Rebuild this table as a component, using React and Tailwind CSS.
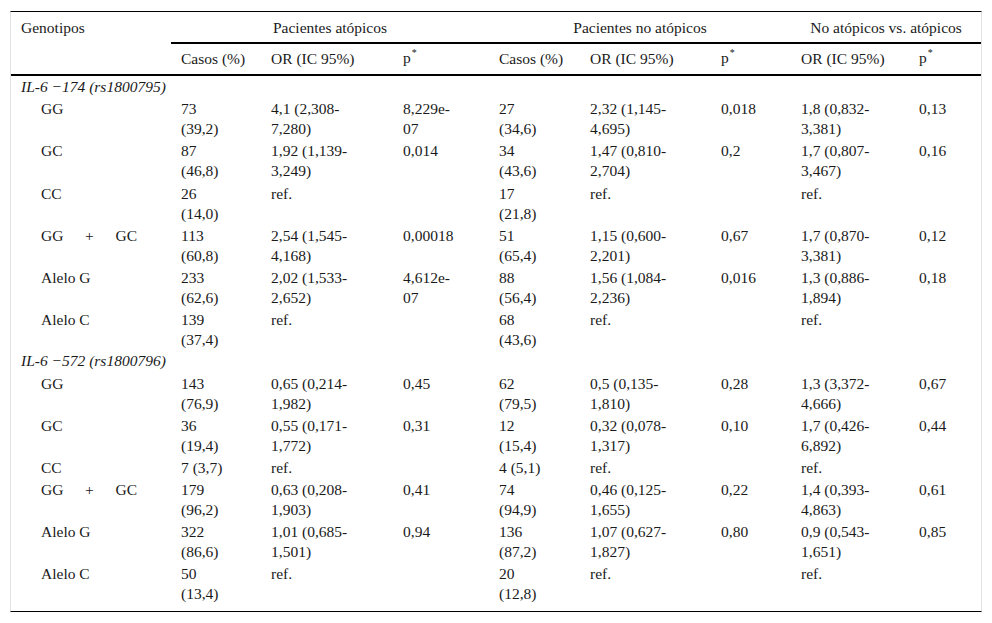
import React from 'react';

const sections = [
    {
        title: 'IL-6 −174 (rs1800795)',
        rows: [
            ['GG', '73\n(39,2)', '4,1 (2,308-\n7,280)', '8,229e-\n07', '27\n(34,6)', '2,32 (1,145-\n4,695)', '0,018', '1,8 (0,832-\n3,381)', '0,13'],
            ['GC', '87\n(46,8)', '1,92 (1,139-\n3,249)', '0,014', '34\n(43,6)', '1,47 (0,810-\n2,704)', '0,2', '1,7 (0,807-\n3,467)', '0,16'],
            ['CC', '26\n(14,0)', 'ref.', '', '17\n(21,8)', 'ref.', '', 'ref.', ''],
            ['GG+GC', '113\n(60,8)', '2,54 (1,545-\n4,168)', '0,00018', '51\n(65,4)', '1,15 (0,600-\n2,201)', '0,67', '1,7 (0,870-\n3,381)', '0,12'],
            ['Alelo G', '233\n(62,6)', '2,02 (1,533-\n2,652)', '4,612e-\n07', '88\n(56,4)', '1,56 (1,084-\n2,236)', '0,016', '1,3 (0,886-\n1,894)', '0,18'],
            ['Alelo C', '139\n(37,4)', 'ref.', '', '68\n(43,6)', 'ref.', '', 'ref.', ''],
        ],
    },
    {
        title: 'IL-6 −572 (rs1800796)',
        rows: [
            ['GG', '143\n(76,9)', '0,65 (0,214-\n1,982)', '0,45', '62\n(79,5)', '0,5 (0,135-\n1,810)', '0,28', '1,3 (3,372-\n4,666)', '0,67'],
            ['GC', '36\n(19,4)', '0,55 (0,171-\n1,772)', '0,31', '12\n(15,4)', '0,32 (0,078-\n1,317)', '0,10', '1,7 (0,426-\n6,892)', '0,44'],
            ['CC', '7 (3,7)', 'ref.', '', '4 (5,1)', 'ref.', '', 'ref.', ''],
            ['GG+GC', '179\n(96,2)', '0,63 (0,208-\n1,903)', '0,41', '74\n(94,9)', '0,46 (0,125-\n1,655)', '0,22', '1,4 (0,393-\n4,863)', '0,61'],
            ['Alelo G', '322\n(86,6)', '1,01 (0,685-\n1,501)', '0,94', '136\n(87,2)', '1,07 (0,627-\n1,827)', '0,80', '0,9 (0,543-\n1,651)', '0,85'],
            ['Alelo C', '50\n(13,4)', 'ref.', '', '20\n(12,8)', 'ref.', '', 'ref.', ''],
        ],
    },
];

const widths = ['w-[160px]', 'w-[90px]', 'w-[132px]', 'w-[96px]', 'w-[91px]', 'w-[131px]', 'w-[80px]', 'w-[118px]', 'w-[72px]'];

const P = () => (
    <span>
        p<span className="text-[10px] relative -top-[7px] left-[1px]">*</span>
    </span>
);

const App = () => {
    return (
        <div className="bg-white w-[992px] h-[623px] pt-[11px] pl-[10px] font-['Liberation_Serif','Times_New_Roman',serif]">
            <div className="w-[972px] border-t border-b border-t-black border-b-black border-l border-r border-l-[#e3e3e3] border-r-[#e3e3e3] pb-[6px] text-[15.5px] leading-[20px] text-[#1a1a1a]">
                <table className="table-fixed border-collapse w-[970px] font-['Liberation_Serif','Times_New_Roman',serif]">
                    <colgroup>
                        {widths.map((w, i) => (
                            <col key={i} className={w} />
                        ))}
                    </colgroup>
                    <thead>
                        <tr>
                            <th rowSpan={2} className="text-left font-normal align-top pl-[10px] pt-[6px] border-b-2 border-b-black">
                                Genotipos
                            </th>
                            <th colSpan={3} className="font-normal text-center pt-[6px] pb-[4px] border-b-2 border-b-black">
                                Pacientes atópicos
                            </th>
                            <th colSpan={3} className="font-normal text-center pt-[6px] pb-[4px] border-b-2 border-b-black">
                                Pacientes no atópicos
                            </th>
                            <th colSpan={2} className="font-normal text-center pt-[6px] pb-[4px] border-b-2 border-b-black">
                                No atópicos vs. atópicos
                            </th>
                        </tr>
                        <tr>
                            {['Casos (%)', 'OR (IC 95%)', 'p', 'Casos (%)', 'OR (IC 95%)', 'p', 'OR (IC 95%)', 'p'].map((h, i) => (
                                <th key={i} className="font-normal text-left pl-[10px] pt-[4px] pb-[4px] border-b-2 border-b-black">
                                    {h === 'p' ? <P /> : h}
                                </th>
                            ))}
                        </tr>
                    </thead>
                    <tbody>
                        {sections.map((s) => (
                            <React.Fragment key={s.title}>
                                <tr>
                                    <td colSpan={9} className="italic pl-[10px] pt-[1px] pb-[0.2px]">
                                        {s.title}
                                    </td>
                                </tr>
                                {s.rows.map((r, ri) => (
                                    <tr key={ri}>
                                        {r.map((c, ci) => (
                                            <td
                                                key={ci}
                                                className={`align-top pt-[2px] pb-[0.2px] whitespace-pre-line ${ci === 0 ? 'pl-[30px]' : 'pl-[10px]'}`}
                                            >
                                                {c === 'GG+GC' ? (
                                                    <span className="inline-flex w-[96px] justify-between">
                                                        <span>GG</span>
                                                        <span>+</span>
                                                        <span>GC</span>
                                                    </span>
                                                ) : (
                                                    c
                                                )}
                                            </td>
                                        ))}
                                    </tr>
                                ))}
                            </React.Fragment>
                        ))}
                    </tbody>
                </table>
            </div>
        </div>
    );
};

export default App;
